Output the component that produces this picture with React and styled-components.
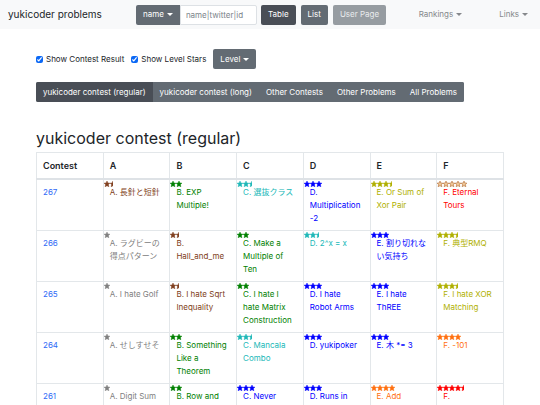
import React from "react";
import styled, { createGlobalStyle, css } from "styled-components";

const Global = createGlobalStyle`
  * { box-sizing: border-box; }
  html { overflow-x: hidden; scrollbar-width: none; }
  body {
    margin: 0;
    background: #fff;
    color: #212529;
    font-family: Inter, "Noto Sans CJK JP", sans-serif;
    font-size: 8px;
    line-height: 13px;
  }
`;

const Navbar = styled.nav`
  display: flex;
  align-items: center;
  min-height: 29px;
  padding: 0 8px;
  background: #f8f9fa;
`;

const Brand = styled.a`
  flex: 0 0 128px;
  color: #212529;
  font-size: 10px;
  text-decoration: none;
  white-space: nowrap;
`;

const Button = styled.button`
  display: inline-flex;
  flex: none;
  align-items: center;
  justify-content: center;
  gap: 3px;
  height: 20px;
  padding: 0 7px;
  border: 0;
  border-radius: ${(p) => (p.$joined ? "2px 0 0 2px" : "2px")};
  background: ${(p) => (p.$active ? "#494e56" : "#636b73")};
  color: #fff;
  font: inherit;
  white-space: nowrap;
  &:disabled { background: #969ca1; color: #e9ebed; }
`;

const Caret = styled.span`
  border: 3px solid transparent;
  border-top-color: currentColor;
  border-bottom: 0;
`;

const InputGroup = styled.form`
  display: flex;
  flex: 0 0 121px;
  min-width: 0;
`;

const NameInput = styled.input`
  flex: 1;
  min-width: 0;
  height: 20px;
  padding: 0 5px;
  border: 1px solid #dde1e5;
  border-radius: 0 2px 2px 0;
  background: #fff;
  font: inherit;
  &::placeholder { color: #7c848b; opacity: 1; }
`;

const NavButtons = styled.div`
  display: flex;
  gap: 5px;
  margin-left: 4px;
`;

const NavLinks = styled.div`
  display: flex;
  flex: 1;
  justify-content: flex-end;
  gap: 37px;
  padding-right: 4px;
`;

const NavLink = styled.a`
  display: flex;
  align-items: center;
  gap: 3px;
  color: #85888b;
  text-decoration: none;
`;

const Page = styled.main`
  padding: 20px 36px 0;
`;

const Options = styled.div`
  display: flex;
  align-items: center;
  gap: 7px;
`;

const Check = styled.label`
  display: flex;
  align-items: center;
  gap: 3px;
`;

const CheckBox = styled.input`
  width: 7px;
  height: 7px;
  margin: 0;
  accent-color: #0b68f5;
`;

const Tabs = styled.div`
  display: inline-flex;
  margin-top: 13px;
  overflow: hidden;
  border-radius: 2px;
  background: #636b73;
`;

const Tab = styled(Button)`
  border-radius: 0;
`;

const Title = styled.h1`
  margin: 26px 0 4px;
  font-size: 16px;
  font-weight: 400;
  line-height: 20px;
`;

const Table = styled.table`
  width: 100%;
  table-layout: fixed;
  border-collapse: collapse;
  border: 1px solid #e3e7ea;
`;

const cell = css`
  border: 1px solid #e3e7ea;
  text-align: left;
  vertical-align: top;
`;

const HeadCell = styled.th`
  ${cell}
  height: 26px;
  padding: 6px;
  border-bottom: 2px solid #dee2e6;
  font-size: 9px;
  font-weight: 600;
`;

const Cell = styled.td`
  ${cell}
  position: relative;
  height: 51px;
  padding: 6px 6px 5px;
  overflow-wrap: break-word;
`;

const ProblemLink = styled.a`
  color: ${(p) => p.$color};
  text-decoration: none;
`;

const StarRow = styled.span`
  position: absolute;
  top: 1px;
  left: 0;
  display: flex;
`;

const STAR = "M6 0.2 L7.7 4 L11.8 4.4 L8.8 7.2 L9.7 11.4 L6 9.3 L2.3 11.4 L3.2 7.2 L0.2 4.4 L4.3 4 Z";

const COLORS = {
  gray: "#808080",
  brown: "#804020",
  green: "#008000",
  cyan: "#20b8b8",
  blue: "#0000ff",
  olive: "#b0b000",
  orange: "#ff7010",
  red: "#ff0000",
};

function Stars({ level, color, hollow }) {
  const stars = [];
  for (let n = level; n > 0; n -= 1) {
    const half = n < 1;
    stars.push(
      <svg key={n} width={half ? 3 : 6} height="6" viewBox={half ? "0 0 6 12" : "0 0 12 12"} aria-hidden="true">
        <path d={STAR} fill={hollow ? "#f0c898" : color} stroke={hollow ? "#b06830" : color} strokeWidth={hollow ? 1.2 : 1} />
      </svg>
    );
  }
  return <StarRow>{stars}</StarRow>;
}

const ROWS = [
  ["267", ["A. 長針と短針", "brown", 1.5], ["B. EXP Multiple!", "green", 2], ["C. 選抜クラス", "cyan", 2.5], ["D. Multiplication -2", "blue", 3], ["E. Or Sum of Xor Pair", "olive", 3.5], ["F. Eternal Tours", "red", 5, true]],
  ["266", ["A. ラグビーの得点パターン", "gray", 1], ["B. Hall_and_me", "brown", 1.5], ["C. Make a Multiple of Ten", "green", 2], ["D. 2^x = x", "cyan", 2.5], ["E. 割り切れない気持ち", "blue", 3], ["F. 典型RMQ", "olive", 3.5]],
  ["265", ["A. I hate Golf", "gray", 1], ["B. I hate Sqrt Inequality", "brown", 1.5], ["C. I hate I hate Matrix Construction", "green", 2], ["D. I hate Robot Arms", "blue", 3], ["E. I hate ThREE", "blue", 3], ["F. I hate XOR Matching", "olive", 3.5]],
  ["264", ["A. せしすせそ", "gray", 1], ["B. Something Like a Theorem", "green", 2], ["C. Mancala Combo", "cyan", 2.5], ["D. yukipoker", "blue", 3], ["E. 木 *= 3", "blue", 3], ["F. -101", "orange", 4]],
  ["261", ["A. Digit Sum", "gray", 1], ["B. Row and", "green", 2], ["C. Never", "blue", 3], ["D. Runs in", "blue", 3], ["E. Add", "orange", 4], ["F.", "red", 4.5]],
];

const TABS = ["yukicoder contest (regular)", "yukicoder contest (long)", "Other Contests", "Other Problems", "All Problems"];

export default function App() {
  return (
    <>
      <Global />
      <Navbar>
        <Brand href="#">yukicoder problems</Brand>
        <InputGroup>
          <Button type="button" $joined>name <Caret /></Button>
          <NameInput aria-label="name" placeholder="name|twitter|id" />
        </InputGroup>
        <NavButtons>
          <Button $active>Table</Button>
          <Button>List</Button>
          <Button disabled>User Page</Button>
        </NavButtons>
        <NavLinks>
          <NavLink href="#rankings">Rankings <Caret /></NavLink>
          <NavLink href="#links">Links <Caret /></NavLink>
        </NavLinks>
      </Navbar>
      <Page>
        <Options>
          <Check><CheckBox type="checkbox" defaultChecked />Show Contest Result</Check>
          <Check><CheckBox type="checkbox" defaultChecked />Show Level Stars</Check>
          <Button>Level <Caret /></Button>
        </Options>
        <Tabs>
          {TABS.map((t, i) => <Tab key={t} $active={i === 0}>{t}</Tab>)}
        </Tabs>
        <Title>yukicoder contest (regular)</Title>
        <Table>
          <thead>
            <tr>{["Contest", "A", "B", "C", "D", "E", "F"].map((h) => <HeadCell key={h} scope="col">{h}</HeadCell>)}</tr>
          </thead>
          <tbody>
            {ROWS.map(([id, ...problems]) => (
              <tr key={id}>
                <Cell><ProblemLink href={`#${id}`} $color="#2f6bf6">{id}</ProblemLink></Cell>
                {problems.map(([name, color, level, hollow]) => (
                  <Cell key={name}>
                    <Stars level={level} color={COLORS[color]} hollow={hollow} />
                    <ProblemLink href="#problem" $color={COLORS[color]}>{name}</ProblemLink>
                  </Cell>
                ))}
              </tr>
            ))}
          </tbody>
        </Table>
      </Page>
    </>
  );
}
